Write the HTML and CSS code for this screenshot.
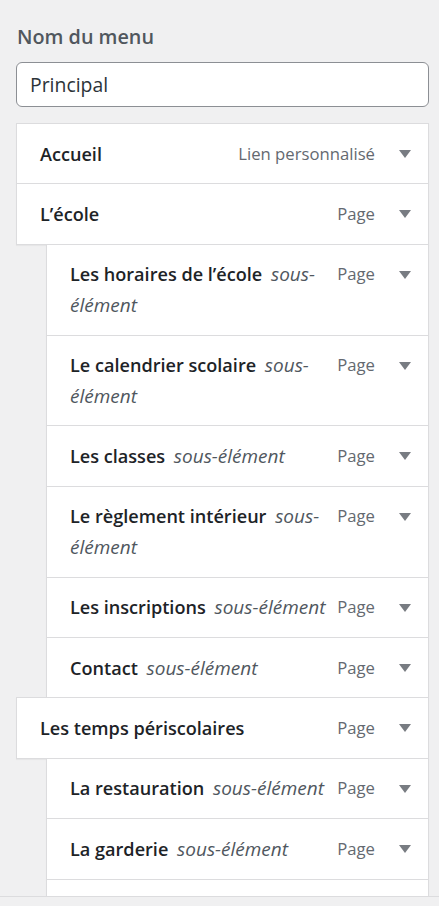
FILE: index.html
```html
<!DOCTYPE html>
<html lang="fr">
<head>
<meta charset="utf-8">
<title>Menu</title>
<link rel="stylesheet" href="styles.css">
</head>
<body>
<div class="panel">
  <label class="label" for="menu-name">Nom du menu</label>
  <input class="name-input" id="menu-name" type="text" value="Principal">
  <ul class="menu">
    <li class="item">
      <span class="title">Accueil</span>
      <span class="controls"><span class="type">Lien personnalisé</span><span class="arrow"></span></span>
    </li>
    <li class="item">
      <span class="title">L’école</span>
      <span class="controls"><span class="type">Page</span><span class="arrow"></span></span>
    </li>
    <li class="item sub">
      <span class="title">Les horaires de l’école <span class="submenu">sous-élément</span></span>
      <span class="controls"><span class="type">Page</span><span class="arrow"></span></span>
    </li>
    <li class="item sub">
      <span class="title">Le calendrier scolaire <span class="submenu">sous-élément</span></span>
      <span class="controls"><span class="type">Page</span><span class="arrow"></span></span>
    </li>
    <li class="item sub">
      <span class="title">Les classes <span class="submenu">sous-élément</span></span>
      <span class="controls"><span class="type">Page</span><span class="arrow"></span></span>
    </li>
    <li class="item sub">
      <span class="title">Le règlement intérieur <span class="submenu">sous-élément</span></span>
      <span class="controls"><span class="type">Page</span><span class="arrow"></span></span>
    </li>
    <li class="item sub">
      <span class="title">Les inscriptions <span class="submenu">sous-élément</span></span>
      <span class="controls"><span class="type">Page</span><span class="arrow"></span></span>
    </li>
    <li class="item sub">
      <span class="title">Contact <span class="submenu">sous-élément</span></span>
      <span class="controls"><span class="type">Page</span><span class="arrow"></span></span>
    </li>
    <li class="item">
      <span class="title">Les temps périscolaires</span>
      <span class="controls"><span class="type">Page</span><span class="arrow"></span></span>
    </li>
    <li class="item sub">
      <span class="title">La restauration <span class="submenu">sous-élément</span></span>
      <span class="controls"><span class="type">Page</span><span class="arrow"></span></span>
    </li>
    <li class="item sub">
      <span class="title">La garderie <span class="submenu">sous-élément</span></span>
      <span class="controls"><span class="type">Page</span><span class="arrow"></span></span>
    </li>
    <li class="item sub empty"></li>
  </ul>
</div>
<div class="footer"></div>
</body>
</html>
```
FILE: styles.css
```css
* { box-sizing: border-box; }
html, body { margin: 0; padding: 0; }
body {
  height: 906px;
  background: #f0f0f1;
  display: flex;
  flex-direction: column;
  overflow: hidden;
  font-family: "Open Sans", "Noto Sans", sans-serif;
  color: #1d2327;
}
.panel {
  flex: 1;
  min-height: 0;
  overflow: hidden;
  padding: 23px 10px 0 16px;
}
.label {
  display: block;
  font-size: 19.8px;
  font-weight: 600;
  line-height: 28px;
  color: #50575e;
  padding-left: 1px;
  margin-bottom: 11px;
}
.name-input {
  display: block;
  width: 100%;
  height: 45px;
  margin: 0 0 16px 0;
  padding: 0 13px;
  border: 1px solid #8c8f94;
  border-radius: 6px;
  background: #fff;
  font-family: "Open Sans", "Noto Sans", sans-serif;
  font-size: 19.4px;
  color: #2c3338;
  outline: none;
}
.menu {
  list-style: none;
  margin: 0;
  padding: 0;
}
.item {
  display: flex;
  align-items: flex-start;
  background: #fff;
  border: 1px solid #dcdcde;
  margin-top: -1px;
  padding: 14.5px 17px 14.5px 23px;
  line-height: 30.4px;
  box-shadow: 0 1px 1px rgba(0, 0, 0, 0.04);
}
.item:first-child { margin-top: 0; }
.sub { margin-left: 30px; }
.empty { min-height: 61px; }
.title {
  flex: 1;
  min-width: 0;
  font-size: 18.1px;
  font-weight: 600;
  color: #1d2327;
}
.submenu {
  margin-left: 4px;
  font-size: 19px;
  font-weight: 400;
  font-style: italic;
  color: #50575e;
}
.controls {
  display: flex;
  align-items: flex-start;
  margin-left: 8px;
  flex: none;
}
.type {
  font-size: 16.7px;
  color: #646970;
  white-space: nowrap;
}
.arrow {
  width: 0;
  height: 0;
  margin: 11.5px 0 0 24px;
  border-left: 6px solid transparent;
  border-right: 6px solid transparent;
  border-top: 8px solid #787c82;
}
.footer {
  flex: none;
  height: 10px;
  border-top: 1px solid #dcdcde;
  background: #f0f0f1;
}
```
